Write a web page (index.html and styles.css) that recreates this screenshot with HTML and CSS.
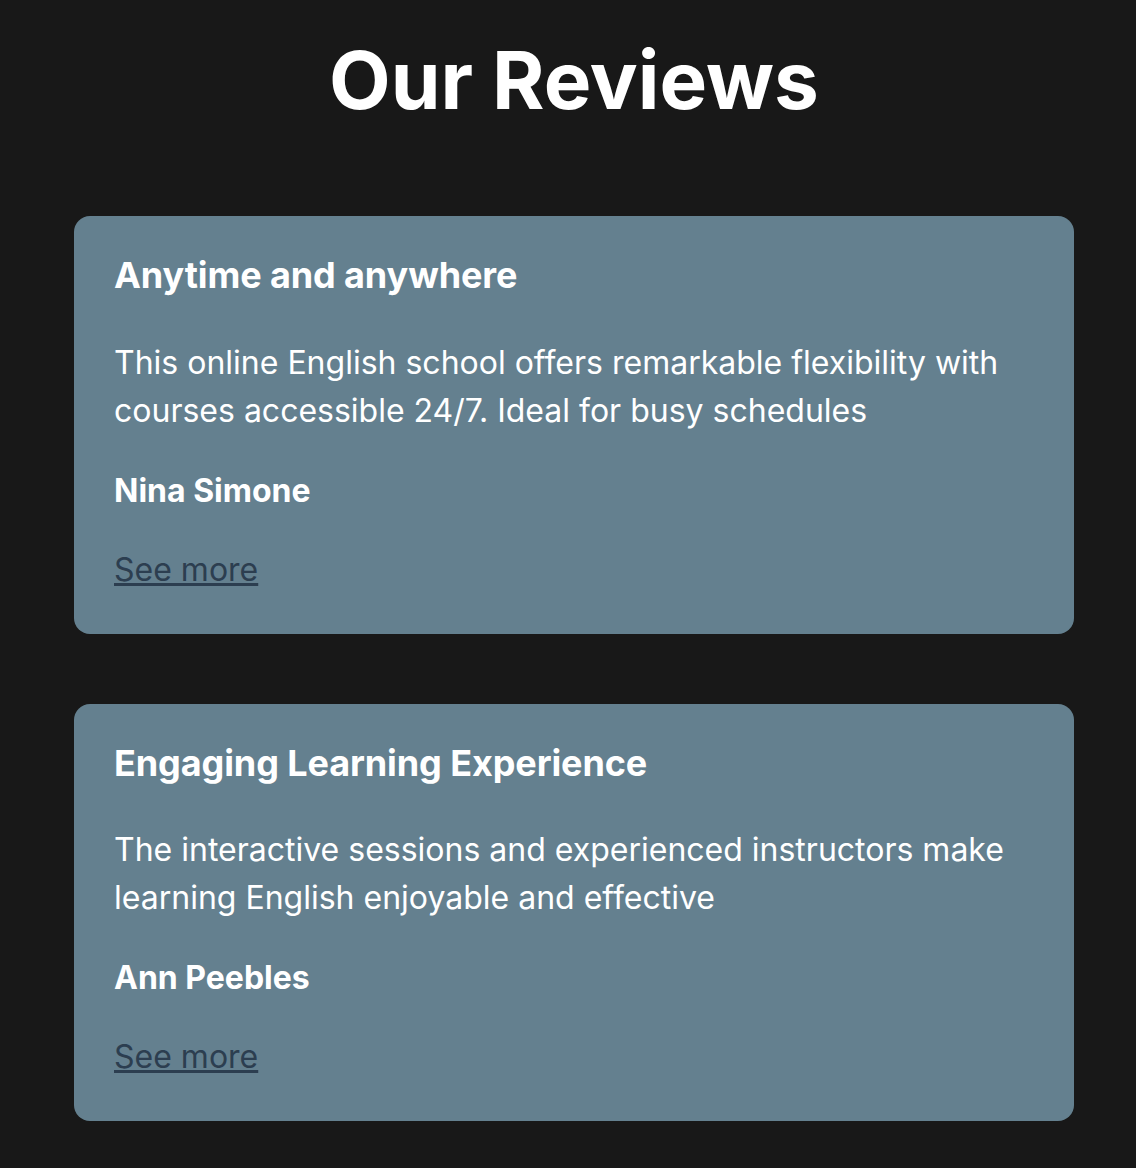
FILE: index.html
```html
<!DOCTYPE html>
<html lang="en">
<head>
<meta charset="utf-8">
<title>Our Reviews</title>
<link rel="stylesheet" href="styles.css">
</head>
<body>
<section class="reviews">
  <h1 class="reviews-title">Our Reviews</h1>
  <div class="review-list">
    <article class="review-card">
      <h3 class="review-heading">Anytime and anywhere</h3>
      <p class="review-text">This online English school offers remarkable flexibility with courses accessible 24/7. Ideal for busy schedules</p>
      <p class="review-author">Nina Simone</p>
      <a class="review-link" href="#">See more</a>
    </article>
    <article class="review-card">
      <h3 class="review-heading">Engaging Learning Experience</h3>
      <p class="review-text">The interactive sessions and experienced instructors make learning English enjoyable and effective</p>
      <p class="review-author">Ann Peebles</p>
      <a class="review-link" href="#">See more</a>
    </article>
  </div>
</section>
</body>
</html>
```
FILE: styles.css
```css
html, body {
  margin: 0;
  padding: 0;
  background: #181818;
}
body {
  font-family: Inter, "Noto Sans", sans-serif;
  color: #ffffff;
}
.reviews {
  padding: 32px 62px 40px 74px;
}
.reviews-title {
  margin: 0 0 88px;
  text-align: center;
  font-size: 80px;
  font-weight: 700;
  line-height: 1.2;
}
.review-list {
  display: flex;
  flex-direction: column;
  gap: 70px;
  width: 1000px;
}
.review-card {
  background: #64808f;
  border-radius: 16px;
  padding: 40px 40px 40px;
  display: flex;
  flex-direction: column;
  align-items: flex-start;
}
.review-heading {
  margin: 0 0 43px;
  font-size: 36px;
  font-weight: 700;
  line-height: 1.1;
  letter-spacing: -0.1px;
}
.review-text {
  margin: 0 0 32px;
  font-size: 32px;
  line-height: 48px;
}
.review-author {
  margin: 0 0 31px;
  font-size: 32px;
  font-weight: 700;
  line-height: 48px;
}
.review-link {
  font-size: 32px;
  line-height: 48px;
  color: #2c3e50;
  text-decoration: underline;
}
```
